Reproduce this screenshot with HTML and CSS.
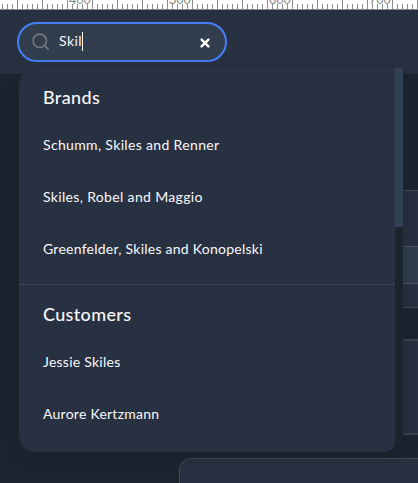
FILE: index.html
```
<!DOCTYPE html>
<html lang="en">
<head>
<meta charset="utf-8">
<title>Search</title>
<link rel="stylesheet" href="styles.css">
</head>
<body>
<div class="ruler"><span>400</span><span>500</span><span>600</span><span>700</span></div>
<header class="topbar">
  <div class="search">
    <svg class="search-icon" width="18" height="18" viewBox="0 0 18 18"><circle cx="7.8" cy="7.8" r="6.7"/><path d="M12.6 12.6L16.3 16.3"/></svg>
    <span class="query">Skil</span><span class="caret"></span>
    <svg class="clear" width="10" height="10" viewBox="0 0 10 10"><path d="M1.6 1.6L8.4 8.4M8.4 1.6L1.6 8.4"/></svg>
  </div>
</header>
<main class="page">
  <section class="card table"><div class="table-head"></div></section>
  <section class="card stats"></section>
  <section class="card wide"></section>
</main>
<div class="results">
  <div class="list">
    <section class="group">
      <h2>Brands</h2>
      <a class="r1">Schumm, Skiles and Renner</a>
      <a class="r2">Skiles, Robel and Maggio</a>
      <a class="r3">Greenfelder, Skiles and Konopelski</a>
    </section>
    <section class="group">
      <h2>Customers</h2>
      <a class="r4">Jessie Skiles</a>
      <a class="r5">Aurore Kertzmann</a>
    </section>
  </div>
  <div class="scrollbar"><div class="thumb"></div></div>
</div>
</body>
</html>
```
FILE: styles.css
```
* { box-sizing: border-box; }
body {
  margin: 0;
  height: 483px;
  overflow: hidden;
  position: relative;
  background: #1b2530;
  color: #f8f9fb;
  font-family: Lato, "Open Sans", sans-serif;
  font-size: 14px;
}
.ruler {
  height: 10px;
  overflow: hidden;
  border-bottom: 1px solid #8c8c8c;
  background:
    repeating-linear-gradient(90deg, #8c8c8c 0 1px, transparent 1px 25px) 17px 0 / 500px 9px no-repeat,
    repeating-linear-gradient(90deg, transparent 0 2px, #8c8c8c 2px 3px, transparent 3px 5px) 0 4px / 100% 5px no-repeat,
    #fff;
  display: flex;
  padding-left: 69px;
  color: #858585;
  font: 13px/14px "Liberation Sans", sans-serif;
}
.ruler span { flex: 0 0 100px; margin-top: -7px; }
.topbar {
  height: 64px;
  padding: 12px 17px;
  background: #283142;
}
.search {
  width: 210px;
  height: 40px;
  display: flex;
  align-items: center;
  padding: 0 15px 2px 13px;
  border: 2px solid #467ffa;
  border-radius: 20px;
  background: #323e4d;
}
.search-icon { margin: 2px 9px 0 0; fill: none; stroke: #747983; stroke-width: 1.6; stroke-linecap: round; }
.query { letter-spacing: .4px; margin-top: -2px; }
.caret { width: 1px; height: 19px; background: #fff; margin-top: 1px; }
.clear { margin: 4px 0 0 auto; stroke: #fff; stroke-width: 2.4; stroke-linecap: round; }
.page { padding-top: 116px; }
.card {
  background: #283142;
  border: 1px solid #414958;
  border-right: 0;
  margin-left: 179px;
}
.table { height: 118px; padding-top: 55px; }
.table-head { height: 38px; background: #323e4d; border: solid #4a5462; border-width: 1px 0; }
.stats { height: 96px; margin-top: 31px; border-width: 2px 0 2px 1px; border-color: #394351; }
.wide { height: 25px; margin-top: 23px; border-bottom: 0; border-radius: 13px 0 0; }
.results {
  position: absolute;
  left: 19px;
  top: 68px;
  width: 384px;
  height: 384px;
  display: flex;
  background: #1b2530;
  border-radius: 16px 0 16px 16px;
  box-shadow: 0 4px 16px rgba(24, 28, 38, .4);
}
.list { width: 376px; background: #283142; border-radius: 16px 0 10px 16px; }
.group { display: flex; flex-direction: column; padding: 12px 24px 8px; height: 216px; }
.group + .group { border-top: 1px solid #3c4553; height: 168px; }
h2 { margin: 0; height: 40px; font-size: 18px; font-weight: 500; line-height: 35px; letter-spacing: .35px; }
.group a { height: 52px; line-height: 49px; white-space: nowrap; }
.r1, .r2 { letter-spacing: .34px; }
.r3, .r4, .r5 { letter-spacing: .25px; }
.scrollbar { width: 8px; }
.thumb { height: 159px; background: #314052; }
```
